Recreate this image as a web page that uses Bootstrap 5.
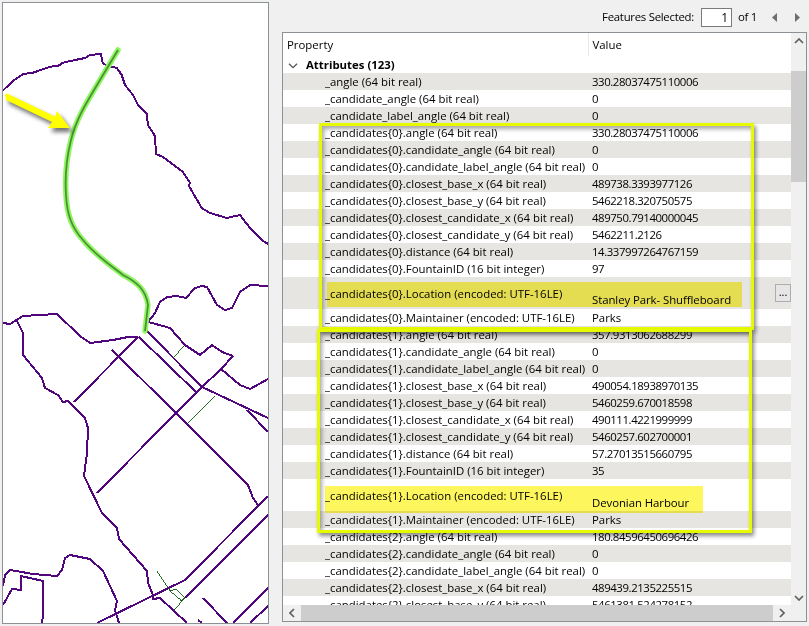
<!DOCTYPE html>
<html lang="en">
<head>
<meta charset="utf-8">
<title>Feature Information</title>
<link href="https://cdn.jsdelivr.net/npm/bootstrap@5.3.0/dist/css/bootstrap.min.css" rel="stylesheet">
<style>
html,body{height:100%;overflow:hidden}
body{background:#f0f0f0;font-family:"Open Sans","Noto Sans",sans-serif;font-size:11.4px;color:#000}
.shell{height:626px;padding:2px 2px 3px 2px}
.map{width:267px;height:622px;flex:none;background:#fff;border:1px solid #8c9196;overflow:hidden}
.map svg{display:block;margin:-3px 0 0 -3px}
.right{margin-left:13px;min-width:0}
.toolbar{height:30px;padding-right:7px;letter-spacing:-.28px}
.pageinput{width:31px;height:19px;border:1px solid #7a7a7a;background:#fff;text-align:right;padding:1px 3px 0 0;line-height:16px;margin:0 6px 0 7px;font-size:12px}
.nav-prev{margin-left:15px}
.nav-next{margin-left:18px}
.panel{border:1px solid #8c9196;background:#f0f0f0;height:590px}
.viewport{height:572px;background:#fff;overflow:hidden}
.props{width:509px;table-layout:fixed;margin:0;--bs-table-bg:transparent;--bs-table-striped-bg:transparent;border-collapse:collapse}
.props th,.props td{padding:0;height:17px;line-height:16px;border:0;white-space:nowrap;overflow:hidden;font-weight:400;color:#000;background:transparent;box-shadow:none;vertical-align:middle}
.props thead th{height:23px;line-height:23px;padding-left:4px}
.props thead th.pcol{width:305px}
.props thead th+th{padding-left:4px;border-left:1px solid #e8e8e8}
.props .g1{padding-left:42px}
.props .v{padding-left:4px}
.props .num{letter-spacing:-.42px}
.props tr.g{background:#e6e5e1}
.props tr.sec td{font-weight:700}
.props tr.tall td{height:32px}
.props tr.tall td.g1{padding-top:1px}
.props tr.tall td.v{vertical-align:bottom;line-height:15px;padding-bottom:2px;letter-spacing:-.07px}
.props tr.tall.t2 td.v{padding-bottom:1px}
.sec-in{padding-left:5px}
.chev{margin-right:8px;vertical-align:0}
.vbar{width:15px;height:572px;background:#f0f0f0}
.arrow-box{height:15px;flex:none}
.vthumb{height:111px;background:#cdcdcd;margin-top:23px}
.hbar{height:16px;background:#f0f0f0}
.hthumb{height:16px;width:472px;background:#cdcdcd;margin-left:1px}
.arrow-col{width:17px;flex:none}
.dots{position:absolute;left:492px;top:251px;width:16px;height:18px;border:1px solid #adadad;background:#e6e6e6;font-size:11px;line-height:14px;text-align:center}
.hl{position:absolute;mix-blend-mode:multiply;background:#fdf65c}
.hl1{left:44px;top:249px;width:415px;height:25px}
.hl2{left:42px;top:453px;width:378px;height:27px}
.callout{position:absolute;border:3px solid #e6fb00;box-shadow:2px 3px 4px rgba(0,0,0,.45),inset 2px 3px 4px rgba(0,0,0,.35);pointer-events:none}
.b1{left:36px;top:90px;width:435px;height:207px}
.b2{left:34px;top:296px;width:435px;height:204px}
.road{fill:none;stroke:#52067e;stroke-width:2;stroke-linejoin:round;shape-rendering:crispEdges}
.thin{fill:none;stroke:#0b5a0b;stroke-width:.9;shape-rendering:crispEdges}
.glow{fill:none;stroke:#8cf75e;stroke-width:5.500;stroke-linecap:round}
.core{fill:none;stroke:#4f8f3a;stroke-width:1.800}
.pointer{filter:drop-shadow(3px 4px 2px rgba(0,0,0,.55))}
</style>
</head>
<body>
<main class="shell d-flex">
  <section class="map">
    <svg width="270" height="626" viewBox="0 0 270 626" aria-label="Map">
      <polyline class="road" points="2.7,90.7 13,81 23,74 33,72.7 50,66.7 58,66 63,62.7 75,60 85,58 90,55 101,54 102.7,63 108,66.7 116.7,67.7 121.7,75 125,85 133,95 138,105 146.7,114 148,125 155,136 156,154 163,157 182.7,171.7 190,182.7 189,186 201.7,208 210,213 226.7,218 240,215 250,228 261.7,240 268,244"/>
      <polyline class="road" points="155,313 160,302 167,297 177,296 186,298 195,288 202,286 207,287 217,305 225,310 232,308 240,292 250,285 268,286"/>
      <polyline class="road" points="3,323 10,324 23,316 57,314 80,336 90,343 113,340 128,337 138,337"/>
      <polyline class="road" points="155,313 148,322 163,326 170,328 177,336 185,345 200,355 212,345 222,352 233,356"/>
      <polyline class="road" points="233,356 221,369 200,389 176,413 97,493"/>
      <polyline class="road" points="221,369 240,385 250,389 268,379"/>
      <polyline class="road" points="17,321 23,333 23,355 42,378 45,388 58,395 63,402 68,401 85,418 88,428 87,453 84,476 102,513 117,528 119,539 147,571 148,583 153,595 153,599 160,598 187,623"/>
      <polyline class="road" points="74,402 138,337"/>
      <polyline class="road" points="112,350 176,413 248,485 253,498 258,505"/>
      <polyline class="road" points="139,337 197,393"/>
      <polyline class="road" points="147,331 202,387 268,418"/>
      <polyline class="road" points="247,410 268,432"/>
      <polyline class="road" points="268,496 185,580 97,623"/>
      <polyline class="road" points="268,515 185,598"/>
      <polyline class="road" points="203,598 227,623"/>
      <polyline class="road" points="233,623 268,588"/>
      <polyline class="road" points="250,623 268,606"/>
      <polyline class="road" points="198,620 202,623"/>
      <polyline class="road" points="3,605 12,589 21,590 21,576 43,581 43,615 42,623"/>
      <polyline class="road" points="3,586 5,575 10,570 33,574 57,576 62,570 65,558 70,555 90,559 103,571 117,601 115,610 119,623"/>
      <polyline class="thin" points="173,358 184,346"/>
      <polyline class="thin" points="188,423 215,396"/>
      <polyline class="thin" points="157,571 170,591 182,601"/>
      <polyline class="thin" points="170,591 176,589 185,598 180,601"/>
      <polyline class="thin" points="174,610 185,598"/>
      <path class="glow" d="M118,50 L97,85 C85,105 76,120 71,140 C66,160 65,180 66,195 C67,215 72,228 83,240 C95,255 110,265 123,275 C137,282 146,290 148,305 L145,331"/>
      <path class="core" d="M118,50 L97,85 C85,105 76,120 71,140 C66,160 65,180 66,195 C67,215 72,228 83,240 C95,255 110,265 123,275 C137,282 146,290 148,305 L145,331"/>
      <g class="pointer">
        <polygon fill="#ffff00" points="5,95 7,93.5 55,116.5 57,111 70,128 48,128 52,122 6,100"/>
      </g>
    </svg>
  </section>

  <section class="right flex-grow-1 d-flex flex-column">
    <div class="toolbar d-flex align-items-center justify-content-end">
      <span>Features Selected:</span>
      <span class="pageinput">1</span>
      <span>of 1</span>
      <svg class="nav-prev" width="5" height="9" viewBox="0 0 5 9" aria-hidden="true"><path fill="#6e6e6e" d="M5 0v9L0 4.500z"/></svg>
      <svg class="nav-next" width="5" height="9" viewBox="0 0 5 9" aria-hidden="true"><path fill="#6e6e6e" d="M0 0v9l5-4.500z"/></svg>
    </div>
    <div class="panel position-relative">
      <div class="d-flex">
        <div class="viewport flex-grow-1">
          <table class="table props">
            <thead><tr><th class="pcol">Property</th><th>Value</th></tr></thead>
            <tbody>
              <tr class="sec"><td colspan="2"><span class="sec-in"><svg class="chev" width="10" height="6" viewBox="0 0 10 6" aria-hidden="true"><path fill="none" stroke="#555" stroke-width="1.3" d="M1 .7l4 4 4-4"/></svg>Attributes (123)</span></td></tr>
              <tr class="g"><td class="g1">_angle (64 bit real)</td><td class="v num">330.28037475110006</td></tr>
              <tr><td class="g1">_candidate_angle (64 bit real)</td><td class="v num">0</td></tr>
              <tr class="g"><td class="g1">_candidate_label_angle (64 bit real)</td><td class="v num">0</td></tr>
              <tr><td class="g1">_candidates{0}.angle (64 bit real)</td><td class="v num">330.28037475110006</td></tr>
              <tr class="g"><td class="g1">_candidates{0}.candidate_angle (64 bit real)</td><td class="v num">0</td></tr>
              <tr><td class="g1">_candidates{0}.candidate_label_angle (64 bit real)</td><td class="v num">0</td></tr>
              <tr class="g"><td class="g1">_candidates{0}.closest_base_x (64 bit real)</td><td class="v num">489738.3393977126</td></tr>
              <tr><td class="g1">_candidates{0}.closest_base_y (64 bit real)</td><td class="v num">5462218.320750575</td></tr>
              <tr class="g"><td class="g1">_candidates{0}.closest_candidate_x (64 bit real)</td><td class="v num">489750.79140000045</td></tr>
              <tr><td class="g1">_candidates{0}.closest_candidate_y (64 bit real)</td><td class="v num">5462211.2126</td></tr>
              <tr class="g"><td class="g1">_candidates{0}.distance (64 bit real)</td><td class="v num">14.337997264767159</td></tr>
              <tr><td class="g1">_candidates{0}.FountainID (16 bit integer)</td><td class="v num">97</td></tr>
              <tr class="g tall"><td class="g1">_candidates{0}.Location (encoded: UTF-16LE)</td><td class="v">Stanley Park- Shuffleboard</td></tr>
              <tr><td class="g1">_candidates{0}.Maintainer (encoded: UTF-16LE)</td><td class="v">Parks</td></tr>
              <tr class="g"><td class="g1">_candidates{1}.angle (64 bit real)</td><td class="v num">357.9313062688299</td></tr>
              <tr><td class="g1">_candidates{1}.candidate_angle (64 bit real)</td><td class="v num">0</td></tr>
              <tr class="g"><td class="g1">_candidates{1}.candidate_label_angle (64 bit real)</td><td class="v num">0</td></tr>
              <tr><td class="g1">_candidates{1}.closest_base_x (64 bit real)</td><td class="v num">490054.18938970135</td></tr>
              <tr class="g"><td class="g1">_candidates{1}.closest_base_y (64 bit real)</td><td class="v num">5460259.670018598</td></tr>
              <tr><td class="g1">_candidates{1}.closest_candidate_x (64 bit real)</td><td class="v num">490111.4221999999</td></tr>
              <tr class="g"><td class="g1">_candidates{1}.closest_candidate_y (64 bit real)</td><td class="v num">5460257.602700001</td></tr>
              <tr><td class="g1">_candidates{1}.distance (64 bit real)</td><td class="v num">57.27013515660795</td></tr>
              <tr class="g"><td class="g1">_candidates{1}.FountainID (16 bit integer)</td><td class="v num">35</td></tr>
              <tr class="tall t2"><td class="g1">_candidates{1}.Location (encoded: UTF-16LE)</td><td class="v">Devonian Harbour</td></tr>
              <tr class="g"><td class="g1">_candidates{1}.Maintainer (encoded: UTF-16LE)</td><td class="v">Parks</td></tr>
              <tr><td class="g1">_candidates{2}.angle (64 bit real)</td><td class="v num">180.84596450696426</td></tr>
              <tr class="g"><td class="g1">_candidates{2}.candidate_angle (64 bit real)</td><td class="v num">0</td></tr>
              <tr><td class="g1">_candidates{2}.candidate_label_angle (64 bit real)</td><td class="v num">0</td></tr>
              <tr class="g"><td class="g1">_candidates{2}.closest_base_x (64 bit real)</td><td class="v num">489439.2135225515</td></tr>
              <tr><td class="g1">_candidates{2}.closest_base_y (64 bit real)</td><td class="v num">5461381.524278152</td></tr>
            </tbody>
          </table>
        </div>
        <div class="vbar d-flex flex-column">
          <div class="arrow-box d-flex align-items-center justify-content-center"><svg width="10" height="6" viewBox="0 0 10 6" aria-hidden="true"><path fill="none" stroke="#606060" stroke-width="1.700" d="M1 5l4-4 4 4"/></svg></div>
          <div class="vthumb"></div>
          <div class="arrow-box d-flex align-items-center justify-content-center mt-auto"><svg width="10" height="6" viewBox="0 0 10 6" aria-hidden="true"><path fill="none" stroke="#606060" stroke-width="1.700" d="M1 1l4 4 4-4"/></svg></div>
        </div>
      </div>
      <div class="hbar d-flex">
        <div class="arrow-col d-flex align-items-center justify-content-center"><svg width="6" height="10" viewBox="0 0 6 10" aria-hidden="true"><path fill="none" stroke="#606060" stroke-width="1.700" d="M5 1L1 5l4 4"/></svg></div>
        <div class="hthumb"></div>
        <div class="arrow-col d-flex align-items-center justify-content-center ms-auto me-3"><svg width="6" height="10" viewBox="0 0 6 10" aria-hidden="true"><path fill="none" stroke="#606060" stroke-width="1.700" d="M1 1l4 4-4 4"/></svg></div>
      </div>
      <div class="dots">...</div>
      <div class="hl hl1"></div>
      <div class="hl hl2"></div>
      <div class="callout b1"></div>
      <div class="callout b2"></div>
    </div>
  </section>
</main>
</body>
</html>
